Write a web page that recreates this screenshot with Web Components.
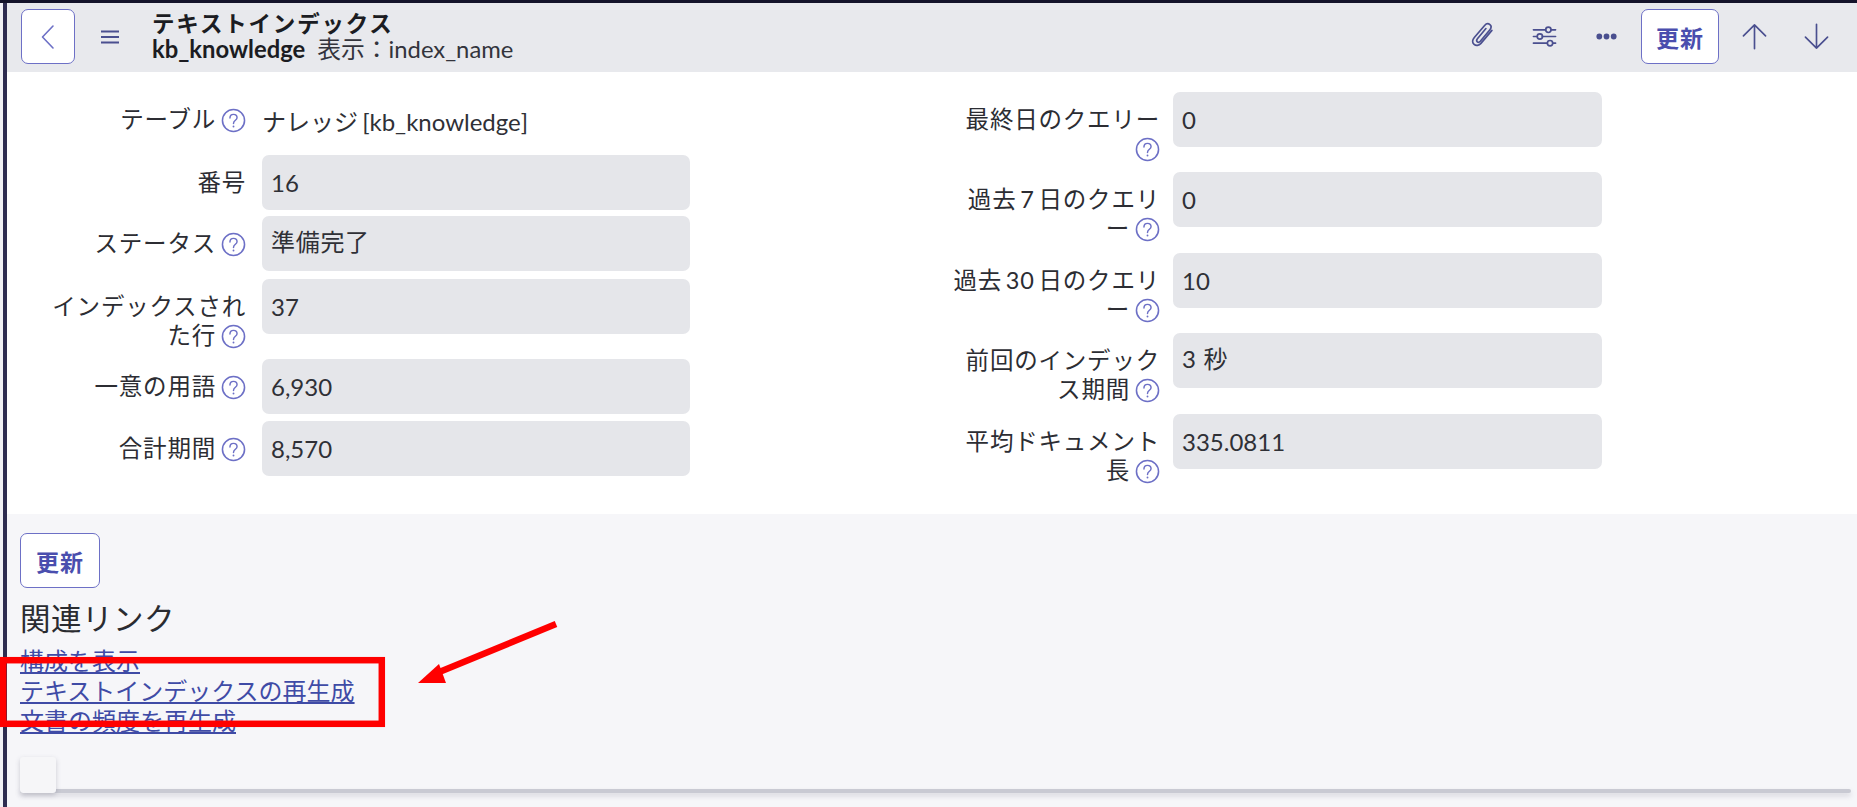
<!DOCTYPE html>
<html lang="ja"><head><meta charset="utf-8">
<style>
html,body{margin:0;height:807px;overflow:hidden;background:#fff}
body{font-family:Lato,"Noto Sans CJK JP",sans-serif;color:#2a2b30}
</style></head>
<body>
<sn-app>
  <sn-header slot="header" title-text="テキストインデックス" table="kb_knowledge" view="表示：index_name"></sn-header>
  <sn-form slot="form">
    <sn-col slot="left" style="--lw:206px;--g:16px">
      <sn-field h="63" help plain value="ナレッジ [kb_knowledge]">テーブル</sn-field>
      <sn-field h="61" value="16">番号</sn-field>
      <sn-field h="63" help cjk value="準備完了">ステータス</sn-field>
      <sn-field h="80" help value="37">インデックスされ<br>た行</sn-field>
      <sn-field h="62" help value="6,930">一意の用語</sn-field>
      <sn-field h="55" help value="8,570">合計期間</sn-field>
    </sn-col>
    <sn-col slot="right" style="--lw:208px;--g:13px">
      <sn-field h="80" help value="0">最終日のクエリー<br></sn-field>
      <sn-field h="81" help value="0">過去 7 日のクエリ<br>ー</sn-field>
      <sn-field h="80" help value="10">過去 30 日のクエリ<br>ー</sn-field>
      <sn-field h="81" help cjk value="3 秒">前回のインデック<br>ス期間</sn-field>
      <sn-field h="80" help value="335.0811">平均ドキュメント<br>長</sn-field>
    </sn-col>
  </sn-form>
  <sn-footer slot="footer">
    <sn-button>更新</sn-button>
    <sn-related heading="関連リンク">
      <a href="#">構成を表示</a>
      <a href="#">テキストインデックスの再生成</a>
      <a href="#">文書の頻度を再生成</a>
    </sn-related>
    <sn-slider></sn-slider>
  </sn-footer>
  <sn-annotation slot="overlay"></sn-annotation>
</sn-app>
<script>
function def(name, html, setup){
  customElements.define(name, class extends HTMLElement{
    constructor(){super();this.attachShadow({mode:'open'}).innerHTML=html;}
    connectedCallback(){ if(setup) setup(this,this.shadowRoot); }
  });
}
const C='#6d70c6', INK='#4a4f8f';
def('sn-app',`<style>
:host{display:flex;flex-direction:column;height:807px;box-sizing:border-box;border-top:3px solid #14132a;padding-left:3px;position:relative;background:#f1f1f5}
.main{flex:1;display:flex;flex-direction:column;border-left:4px solid #2e2c50;min-height:0}
</style><div class="main"><slot name="header"></slot><slot name="form"></slot><slot name="footer"></slot></div><slot name="overlay"></slot>`);

def('sn-icon-btn',`<style>
:host{display:flex;width:62px;height:55px;align-items:center;justify-content:center;color:${INK}}
svg{width:31px;height:31px;fill:none;stroke:currentColor;stroke-width:1.5;stroke-linecap:round;stroke-linejoin:round}
</style><svg viewBox="0 0 28 28"></svg>`,(el,s)=>{s.querySelector('svg').innerHTML=el.getAttribute('d')});

def('sn-button',`<style>
:host{display:inline-flex;box-sizing:border-box;height:55px;width:var(--w,80px);align-items:center;justify-content:center;background:#fff;border:1.5px solid ${C};border-radius:7px;color:#4a4eae;font-weight:700;font-size:23px;letter-spacing:1px}
</style><slot></slot>`);

def('sn-header',`<style>
:host{display:flex;align-items:center;height:69px;box-sizing:border-box;background:#e8e9ed;padding:0 10px 2px 14px;flex:none}
.back{--w:54px;color:${C}}
.menu{margin-left:15px;width:40px;height:20px;display:flex;align-items:center;justify-content:center;color:${INK}}
.t{margin-left:22px;flex:1;line-height:26px;color:#1b1c22}
.n{font-size:22.5px;font-weight:700;letter-spacing:1.8px;line-height:25px}
.s{font-size:23.8px;line-height:26px}
.s b{font-weight:700;margin-right:12px}
.s span{color:#33343c}
.gap{--w:78px;margin:0 4px 0 4px}
</style>
<sn-button class="back"><svg width="16" height="26" viewBox="0 0 16 26" fill="none" stroke="${C}" stroke-width="1.6" stroke-linecap="round" stroke-linejoin="round"><path d="M13 2 2.5 13 13 24"/></svg></sn-button>
<div class="menu"><svg width="20" height="14" viewBox="0 0 20 14" fill="none" stroke="${INK}" stroke-width="1.9"><path d="M1 1.5h18M1 7h18M1 12.5h18"/></svg></div>
<div class="t"><div class="n"></div><div class="s"><b></b><span></span></div></div>
<sn-icon-btn d='<path d="M22.5 8.5 12.6 20.2c-1.9 2.2-4.6 2.3-6.2.9s-1.7-3.9.2-6.2L15.9 4c1.4-1.6 3.4-1.9 4.8-.7s1.3 3 0 4.6l-8.7 10.4c-.8.9-2 1.1-2.7.5s-.7-1.8.1-2.8l7.7-9.2"/>'></sn-icon-btn>
<sn-icon-btn d='<path d="M4 8h11M20 8h4M4 14h3.5M12 14h12M4 20h12.5M21.500 20h2.500"/><circle cx="17.500" cy="8" r="2.400"/><circle cx="9.800" cy="14" r="2.400"/><circle cx="19" cy="20" r="2.400"/>'></sn-icon-btn>
<sn-icon-btn d='<g fill="currentColor" stroke="none"><circle cx="7.5" cy="14" r="2.6"/><circle cx="14" cy="14" r="2.6"/><circle cx="20.5" cy="14" r="2.6"/></g>'></sn-icon-btn>
<sn-button class="gap">更新</sn-button>
<sn-icon-btn d='<path d="M14 25V3.5M4 13.5 14 3.5l10 10"/>'></sn-icon-btn>
<sn-icon-btn d='<path d="M14 3v21.5M4 14.5l10 10 10-10"/>'></sn-icon-btn>`,
(el,s)=>{s.querySelector('.n').textContent=el.getAttribute('title-text');
s.querySelector('b').textContent=el.getAttribute('table');s.querySelector('span').textContent=el.getAttribute('view');});

def('sn-form',`<style>
:host{display:flex;flex:none;height:442px;box-sizing:border-box;background:#fff;padding:20px 0 0 33px;gap:262px}
</style><slot name="left"></slot><slot name="right"></slot>`);
def('sn-col',`<style>:host{display:flex;flex-direction:column;width:650px}</style><slot></slot>`);

def('sn-help',`<style>:host{display:inline-block;width:25px;height:25px;vertical-align:-5px;margin-left:5px}svg{display:block}</style>
<svg width="25" height="25" viewBox="0 0 24 24" fill="none" stroke="${C}"><circle cx="12" cy="12" r="10.6" stroke-width="1.5"/><path d="M8.6 9.6c0-2.2 1.5-3.5 3.4-3.5s3.4 1.3 3.4 3.2c0 2.5-3.4 2.6-3.4 5.6" stroke-width="1.4" stroke-linecap="round"/><circle cx="12" cy="17.8" r=".9" fill="${C}" stroke="none"/></svg>`);

def('sn-field',`<style>
:host{display:flex;gap:var(--g);align-items:flex-start;height:calc(var(--h)*1px);font-size:23.5px}
.l{width:var(--lw);flex:none;text-align:right;line-height:29px;padding-top:13px;letter-spacing:.8px;word-spacing:-3px;color:#2c2d33;white-space:nowrap}
.v{flex:1;height:55px;box-sizing:border-box;background:#e5e6ea;border-radius:7px;padding:0 9px 0;display:flex;align-items:center;font-size:24px;color:#2f3036}
.v.plain{background:none;padding-left:0;height:57px;word-spacing:-2px}
.v.cjk{padding-bottom:6px;letter-spacing:.7px}
</style><div class="l"><slot></slot><span class="h"></span></div><div class="v"></div>`,
(el,s)=>{el.style.setProperty('--h',el.getAttribute('h'));
const v=s.querySelector('.v');v.textContent=el.getAttribute('value');
if(el.hasAttribute('plain'))v.classList.add('plain');
if(el.hasAttribute('cjk'))v.classList.add('cjk');
if(el.hasAttribute('help'))s.querySelector('.h').innerHTML='<sn-help></sn-help>';});

def('sn-footer',`<style>
:host{display:flex;flex-direction:column;align-items:flex-start;flex:1;background:#f6f6f9;padding:19px 6px 0 13px;min-height:0}
</style><slot></slot>`);

def('sn-related',`<style>
:host{display:block;margin-top:12px;color:#2a2b30}
h2{font-weight:400;font-size:30.5px;line-height:36px;margin:0 0 10px;letter-spacing:.5px}
::slotted(a){display:block;color:#3f4ba6;font-size:24px;line-height:30px;text-underline-offset:2px}
</style><h2></h2><slot></slot>`,(el,s)=>{s.querySelector('h2').textContent=el.getAttribute('heading')});

def('sn-slider',`<style>
:host{display:block;align-self:stretch;position:relative;margin-top:21px;height:36px}
.line{position:absolute;left:0;right:0;bottom:0;height:4px;box-sizing:border-box;background:#c9cad3;box-shadow:0 3px 5px rgba(120,120,140,.25);border-radius:2px}
.thumb{position:absolute;left:0;top:0;width:36px;height:36px;border-radius:3px;background:#f6f6f8;box-shadow:0 2px 5px rgba(90,90,110,.28)}
</style><div class="line"></div><div class="thumb"></div>`);

def('sn-annotation',`<style>
:host{position:absolute;inset:-3px 0 0 0;pointer-events:none;display:block}
svg{position:absolute;left:0;top:0}
</style><svg width="1857" height="807" fill="none">
<rect x="3.2" y="660.2" width="378.600" height="63.600" stroke="#f00" stroke-width="6.5"/>
<path d="M556 624 432 675" stroke="#f00" stroke-width="6.5"/>
<path d="M418 683 439 664 446 683Z" fill="#f00"/>
</svg>`);
</script>
</body></html>
